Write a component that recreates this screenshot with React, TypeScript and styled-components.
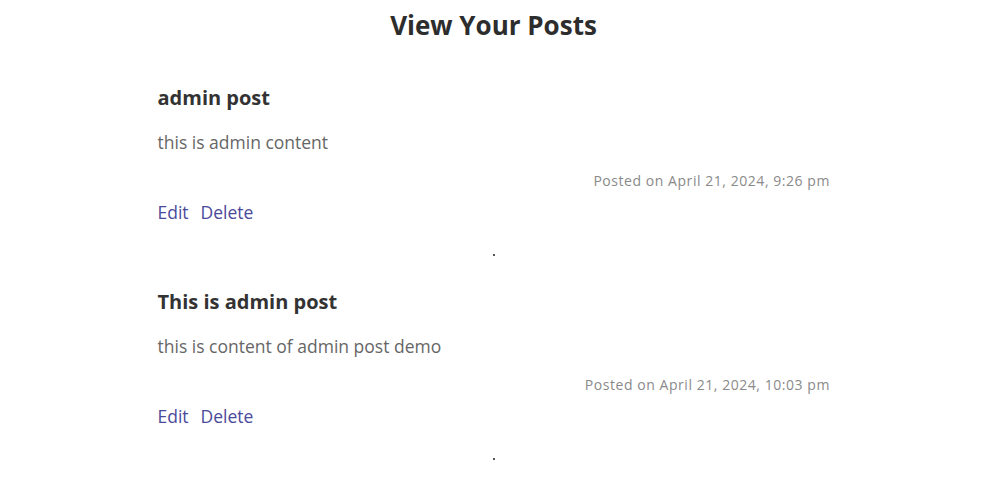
import React from "react";
import styled, { createGlobalStyle } from "styled-components";

const Global = createGlobalStyle`
  body { margin: 0; background: #fff; font-family: "Open Sans", "Noto Sans", sans-serif; }
`;

const Page = styled.div`
  display: flex;
  flex-direction: column;
  align-items: center;
  padding-top: 8px;
`;

const Title = styled.h1`
  margin: 0;
  font-size: 26px;
  font-weight: 700;
  color: #2d2d2d;
  line-height: 34px;
`;

const List = styled.div`
  width: 672px;
  margin-top: 43px;
  display: flex;
  flex-direction: column;
`;

const Post = styled.div`
  display: flex;
  flex-direction: column;
  height: 203.5px;
`;

const PostTitle = styled.h2`
  margin: 0;
  font-size: 20px;
  font-weight: 700;
  color: #333;
  line-height: 26px;
`;

const Content = styled.p`
  margin: 20px 0 0;
  font-size: 17.5px;
  color: #666;
  line-height: 22px;
`;

const Meta = styled.div`
  margin-top: 19px;
  margin-right: -0.5px;
  text-align: right;
  font-size: 14px;
  letter-spacing: 0.55px;
  color: #8a8a8a;
  line-height: 18px;
`;

const Actions = styled.div`
  margin-top: 10px;
  display: flex;
  gap: 12px;
  font-size: 17.5px;
  line-height: 24px;
`;

const Action = styled.a`
  color: #4a4a9a;
  text-decoration: none;
  cursor: pointer;
`;

const Dot = styled.div`
  align-self: center;
  margin-top: 30px;
  width: 2px;
  height: 2px;
  background: #555;
`;

const posts = [
  { title: "admin post", content: "this is admin content", date: "April 21, 2024, 9:26 pm" },
  { title: "This is admin post", content: "this is content of admin post demo", date: "April 21, 2024, 10:03 pm" },
];

export default function App() {
  return (
    <>
      <Global />
      <Page>
        <Title>View Your Posts</Title>
        <List>
          {posts.map((p) => (
            <Post key={p.title}>
              <PostTitle>{p.title}</PostTitle>
              <Content>{p.content}</Content>
              <Meta>Posted on {p.date}</Meta>
              <Actions>
                <Action>Edit</Action>
                <Action>Delete</Action>
              </Actions>
              <Dot />
            </Post>
          ))}
        </List>
      </Page>
    </>
  );
}
